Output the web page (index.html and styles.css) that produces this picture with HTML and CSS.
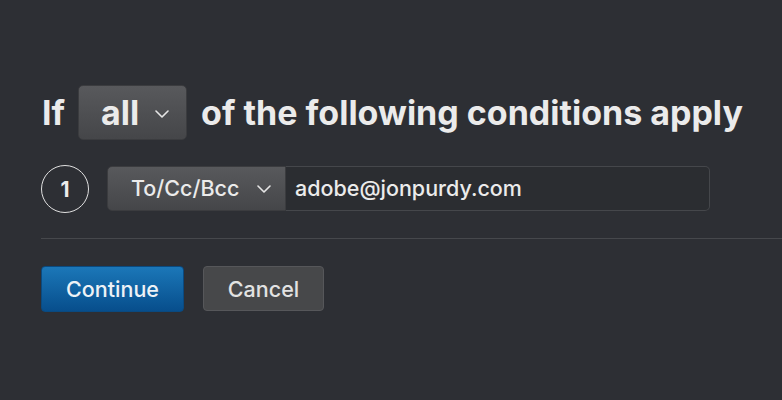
FILE: index.html
```html
<!DOCTYPE html>
<html>
<head>
<meta charset="utf-8">
<link rel="stylesheet" href="styles.css">
</head>
<body>
<div class="panel">
  <div class="heading">
    <span class="word">If</span>
    <div class="select big">
      <span>all</span>
      <svg class="chev" width="14" height="8" viewBox="0 0 14 8"><path d="M1 1 L7 7 L13 1" fill="none" stroke="#e6e6e6" stroke-width="1.6" stroke-linecap="round" stroke-linejoin="round"/></svg>
    </div>
    <span class="word">of the following conditions apply</span>
  </div>
  <div class="cond">
    <div class="num">1</div>
    <div class="field">
      <div class="select small">
        <span>To/Cc/Bcc</span>
        <svg class="chev" width="14" height="8" viewBox="0 0 14 8"><path d="M1 1 L7 7 L13 1" fill="none" stroke="#e6e6e6" stroke-width="1.6" stroke-linecap="round" stroke-linejoin="round"/></svg>
      </div>
      <div class="input">adobe@jonpurdy.com</div>
    </div>
  </div>
  <div class="divider"></div>
  <div class="actions">
    <button class="btn primary">Continue</button>
    <button class="btn secondary">Cancel</button>
  </div>
</div>
</body>
</html>
```
FILE: styles.css
```css
html, body {
  margin: 0;
  padding: 0;
  background: #2d2f34;
  width: 782px;
  height: 400px;
  overflow: hidden;
  font-family: Inter, "Liberation Sans", sans-serif;
  color: #ebebeb;
}
.panel {
  padding: 85px 0 0 41px;
}
.heading {
  display: flex;
  align-items: center;
  height: 55px;
}
.word {
  font-size: 34px;
  font-weight: 700;
  letter-spacing: 0;
  padding-left: 1px;
}
.select {
  display: flex;
  align-items: center;
  box-sizing: border-box;
  background: linear-gradient(#58595c, #454649);
  border-radius: 5px;
  border: 1px solid #3b3c3f;
}
.select.big {
  width: 109px;
  height: 55px;
  margin: 0 13px 0 13px;
  padding-left: 22px;
  font-size: 34px;
  font-weight: 700;
}
.select.big .chev {
  margin-left: 16px;
  margin-top: 2px;
}
.cond {
  display: flex;
  align-items: center;
  margin-top: 25px;
}
.num {
  box-sizing: border-box;
  width: 48px;
  height: 48px;
  border: 1.5px solid #e0e0e0;
  border-radius: 50%;
  display: flex;
  align-items: center;
  justify-content: center;
  font-size: 21px;
  font-weight: 700;
}
.field {
  display: flex;
  margin-left: 18px;
  height: 45px;
  margin-top: -2px;
}
.select.small {
  width: 179px;
  height: 45px;
  padding-left: 23px;
  font-size: 21.5px;
  font-weight: 500;
  border-radius: 5px 0 0 5px;
}
.select.small .chev {
  margin-left: 18px;
  margin-top: 1px;
}
.input {
  box-sizing: border-box;
  width: 424px;
  height: 45px;
  border: 1px solid #45474b;
  border-left: none;
  border-radius: 0 5px 5px 0;
  background: #2b2d31;
  display: flex;
  align-items: center;
  padding-left: 9px;
  font-size: 21.5px;
  font-weight: 500;
}
.divider {
  height: 1px;
  background: #46484c;
  margin-top: 25px;
}
.actions {
  display: flex;
  gap: 19px;
  margin-top: 27px;
}
.btn {
  height: 46px;
  border-radius: 4px;
  font-family: Inter, "Liberation Sans", sans-serif;
  font-size: 21.5px;
  font-weight: 500;
  color: #eef2f6;
  padding: 0;
  box-sizing: border-box;
}
.primary {
  width: 143px;
  background: linear-gradient(#1b77b8, #074e8c);
  border: 1px solid #0a4a80;
}
.secondary {
  width: 121px;
  height: 45px;
  background: #47484a;
  border: 1px solid #56575a;
  color: #e2e2e2;
}
```
